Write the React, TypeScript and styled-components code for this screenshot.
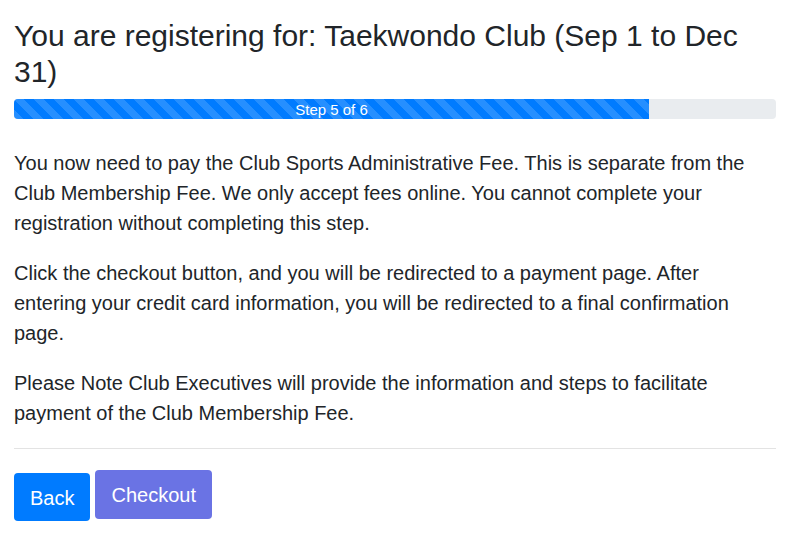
import React from 'react';
import styled, { createGlobalStyle } from 'styled-components';

const GlobalStyle = createGlobalStyle`
  body {
    margin: 0;
    background: #fff;
    font-family: "Liberation Sans", Arial, sans-serif;
    color: #212529;
  }
`;

const Page = styled.div`
  padding: 18px 14px 0 14px;
`;

const Title = styled.h2`
  margin: 0 0 9px 0;
  font-size: 30px;
  font-weight: 400;
  line-height: 36px;
`;

const Progress = styled.div`
  display: flex;
  height: 20px;
  background: #e9ecef;
  border-radius: 4px;
  overflow: hidden;
  margin-bottom: 29px;
`;

const ProgressBar = styled.div`
  display: flex;
  align-items: center;
  justify-content: center;
  background-color: #007bff;
  background-image: linear-gradient(
    45deg,
    rgba(255, 255, 255, 0.15) 25%,
    transparent 25%,
    transparent 50%,
    rgba(255, 255, 255, 0.15) 50%,
    rgba(255, 255, 255, 0.15) 75%,
    transparent 75%,
    transparent
  );
  background-size: 20px 20px;
  color: #fff;
  font-size: 15px;
`;

const Text = styled.p`
  margin: 0 0 20px 0;
  font-size: 20px;
  line-height: 30px;
`;

const Divider = styled.hr`
  border: 0;
  border-top: 1px solid #e3e3e3;
  margin: 0 0 21px 0;
`;

const Actions = styled.div`
  display: flex;
  align-items: flex-start;
  gap: 5px;
`;

const Button = styled.button<{ $variant: 'back' | 'checkout' }>`
  font-family: inherit;
  font-size: 20px;
  color: #fff;
  border: 0;
  border-radius: 4px;
  cursor: pointer;
  background: ${p => (p.$variant === 'back' ? '#007bff' : '#6a73e4')};
  padding: ${p => (p.$variant === 'back' ? '12px 16px 10px' : '12px 16px 11px')};
  margin-top: ${p => (p.$variant === 'back' ? '3px' : '0')};
  line-height: 26px;
`;

const App: React.FC = () => {
  const step = 5;
  const total = 6;
  return (
    <Page>
      <GlobalStyle />
      <Title>You are registering for: Taekwondo Club (Sep 1 to Dec 31)</Title>
      <Progress>
        <ProgressBar style={{ width: `${(step / total) * 100}%` }}>
          Step {step} of {total}
        </ProgressBar>
      </Progress>
      <Text>
        You now need to pay the Club Sports Administrative Fee. This is separate from the
        Club Membership Fee. We only accept fees online. You cannot complete your
        registration without completing this step.
      </Text>
      <Text>
        Click the checkout button, and you will be redirected to a payment page. After
        entering your credit card information, you will be redirected to a final
        confirmation page.
      </Text>
      <Text>
        Please Note Club Executives will provide the information and steps to facilitate
        payment of the Club Membership Fee.
      </Text>
      <Divider />
      <Actions>
        <Button $variant="back">Back</Button>
        <Button $variant="checkout">Checkout</Button>
      </Actions>
    </Page>
  );
};

export default App;
